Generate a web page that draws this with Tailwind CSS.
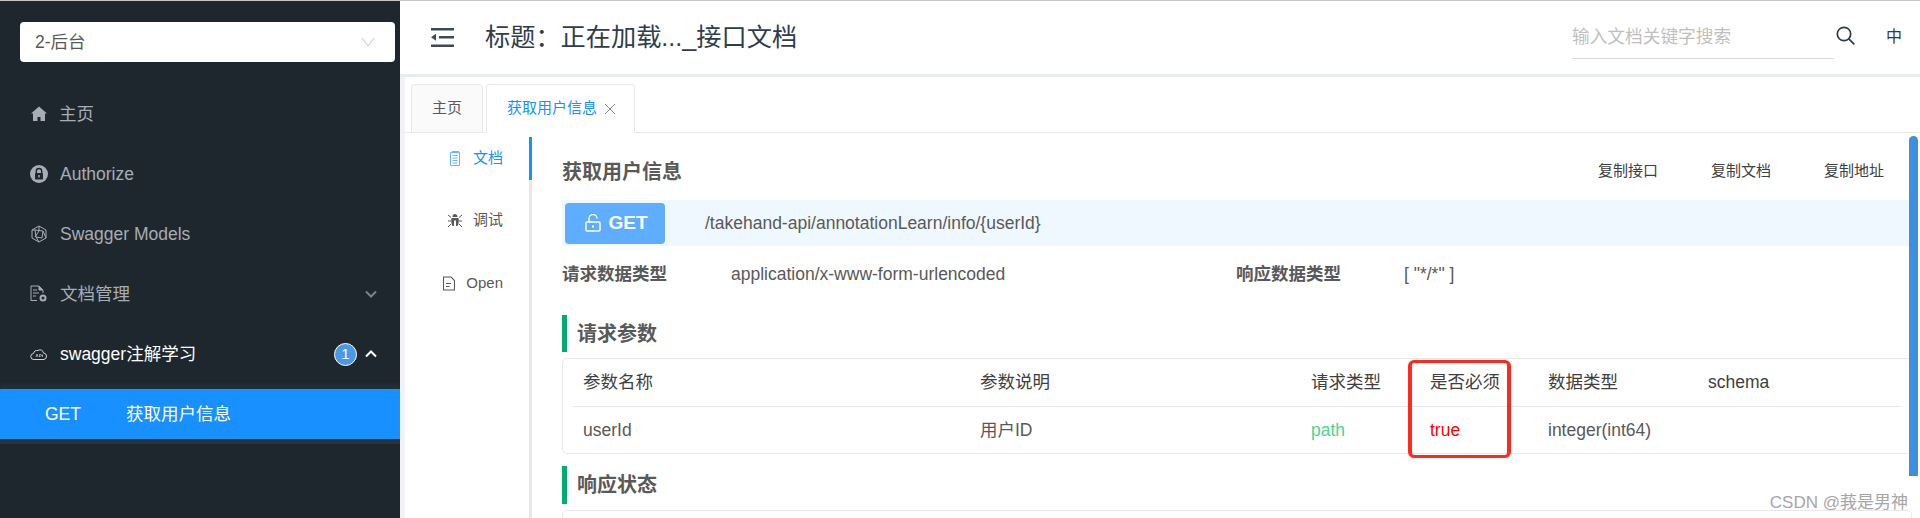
<!DOCTYPE html>
<html lang="zh">
<head>
<meta charset="utf-8">
<title>接口文档</title>
<script src="https://cdn.jsdelivr.net/npm/@tailwindcss/browser@4"></script>
</head>
<body class="m-0 bg-white font-['Liberation_Sans','Noto_Sans_CJK_SC',sans-serif]">
<div class="relative h-[518px] w-[1920px] overflow-hidden border-t border-[#c4c4c4] flex">
  <!-- Sidebar -->
  <aside class="w-[400px] shrink-0 bg-[#1f272e] flex flex-col">
    <div class="mt-[21px] ml-[20px] h-[40px] w-[375px] rounded-[4px] bg-white flex items-center justify-between pl-[15px] pr-[20px] text-[17.5px] text-[#595959]">
      <span>2-后台</span>
      <svg class="w-[14px] h-[10px]" viewBox="0 0 14 10" fill="none" stroke="#bfbfbf" stroke-width="1"><path d="M1 1l6 8 6-8"/></svg>
    </div>
    <nav class="mt-[22px] text-[17.5px] text-[#a6adb4]">
      <div class="h-[60px] flex items-center pl-[30px]">
        <svg class="w-[18px] h-[18px] mr-[11px]" viewBox="0 0 18 18" fill="#a6adb4"><path d="M9 1.500L1 8.500h2V16h4.500v-4h3v4H15V8.500h2z"/></svg>
        <span>主页</span>
      </div>
      <div class="h-[60px] flex items-center pl-[30px]">
        <svg class="w-[18px] h-[18px] mr-[12px]" viewBox="0 0 18 18"><circle cx="9" cy="9" r="9" fill="#a6adb4"/><path d="M6.300 8V6.200a2.700 2.700 0 015.400 0V8" fill="none" stroke="#1f272e" stroke-width="1.400"/><rect x="5" y="8" width="8" height="6.500" rx=".8" fill="#1f272e"/><rect x="8.300" y="10" width="1.400" height="2.500" fill="#a6adb4"/></svg>
        <span>Authorize</span>
      </div>
      <div class="h-[60px] flex items-center pl-[30px]">
        <svg class="w-[18px] h-[18px] mr-[12px]" viewBox="0 0 18 18" fill="none" stroke="#a6adb4" stroke-width="1"><path d="M9 1l7 4v8l-7 4-7-4V5z"/><path d="M5 5l8 1-1 7-6-1zM9 1v5l-4 6M13 6l3 7M2 5l3 0M6 12l3 5"/></svg>
        <span>Swagger Models</span>
      </div>
      <div class="h-[60px] flex items-center pl-[30px] pr-[23px]">
        <svg class="w-[18px] h-[18px] mr-[12px]" viewBox="0 0 18 18" fill="none" stroke="#a6adb4" stroke-width="1"><path d="M7 15.500H1V1h8l4 4v3"/><path d="M9 1v4h4" fill="#a6adb4"/><path d="M3 5h4M3 8h6M3 11h3"/><circle cx="13" cy="13" r="2.500" stroke-width="2"/></svg>
        <span>文档管理</span>
        <svg class="ml-auto w-[12px] h-[8px]" viewBox="0 0 12 8" fill="none" stroke="#7b8288" stroke-width="2"><path d="M1 1.500l5 5 5-5"/></svg>
      </div>
      <div class="h-[60px] flex items-center pl-[30px] pr-[23px] text-white">
        <svg class="w-[18px] h-[12px] mr-[12px]" viewBox="0 0 18 12" fill="none" stroke="#cfd3d6" stroke-width="1"><path d="M4 11.500a3 3 0 01-.5-6A4 4 0 018 2.500 3.500 3.500 0 0113.500 5a3.300 3.300 0 01.5 6.500z"/><path d="M6 9l1-3 1 3M9.500 9V6.500h1.200a.8.8 0 010 1.600H9.500M12.500 6.500V9" stroke-width=".7"/></svg>
        <span>swagger注解学习</span>
        <span class="ml-auto flex items-center justify-center w-[23px] h-[23px] rounded-full bg-[#4a98e8] border border-white text-[15px] mr-[8px]">1</span>
        <svg class="w-[12px] h-[8px]" viewBox="0 0 12 8" fill="none" stroke="#ffffff" stroke-width="2"><path d="M1 6.500l5-5 5 5"/></svg>
      </div>
      <div class="mt-[5px] h-[50px] bg-[#1890ff] flex items-center text-white shadow-[0_-4px_4px_rgba(60,75,85,0.25)]">
        <span class="w-[126px] pl-[45px]">GET</span>
        <span>获取用户信息</span>
      </div>
      <div class="h-[5px] bg-[#28343a]"></div>
    </nav>
  </aside>

  <!-- Main -->
  <main class="flex-1 min-w-0 flex flex-col">
    <header class="h-[73px] shrink-0 flex items-center bg-white">
      <svg class="ml-[31px] w-[23px] h-[19px]" viewBox="0 0 23 19" fill="#3d4a57"><rect x="0" y="0" width="23" height="2.500"/><rect x="8" y="8" width="15" height="2.500"/><rect x="0" y="16.500" width="23" height="2.500"/><path d="M0 9.200l5-3.500v7z"/></svg>
      <h1 class="ml-[31px] text-[25.2px] font-normal text-[#303d4a]">标题：正在加载..._接口文档</h1>
      <div class="ml-auto w-[262px] h-[38px] mt-[5px] border-b border-[#d9d9d9] text-[17.7px] text-[#bfbfbf] flex items-start leading-[32px]">输入文档关键字搜索</div>
      <svg class="ml-[2px] mb-[4px] w-[19px] h-[19px]" viewBox="0 0 19 19" fill="none" stroke="#2f3b47" stroke-width="1.700"><circle cx="8" cy="8" r="6.700"/><path d="M12.800 12.800l5.500 5.500"/></svg>
      <span class="ml-[31px] mr-[18px] mb-[2px] text-[16px] text-[#2f3b47]">中</span>
    </header>
    <div class="h-[3px] shrink-0 bg-[#e8ebef]"></div>
    <div class="flex-1 flex min-h-0">
      <div class="w-[5px] shrink-0 bg-[#f0f2f5]"></div>
      <div class="flex-1 min-w-0 relative">
        <!-- Tabs -->
        <div class="h-[56px] pt-[7px] pl-[6px] border-b border-[#e8e8e8] flex items-start gap-[3px] mr-[1px]">
          <div class="w-[72px] h-[49px] flex items-center justify-center bg-[#fafafa] border border-[#e8e8e8] rounded-t-[4px] text-[15px] text-[#595959]">主页</div>
          <div class="w-[149px] h-[49px] flex items-center pl-[20px] bg-white border border-[#e8e8e8] border-b-white rounded-t-[4px] text-[15px] text-[#1890ff]">
            <span>获取用户信息</span>
            <svg class="ml-[7px] w-[12px] h-[12px]" viewBox="0 0 12 12" fill="none" stroke="#8c8c8c" stroke-width="1"><path d="M1 1l10 10M11 1L1 11"/></svg>
          </div>
        </div>
        <div class="flex h-[391px]">
          <!-- Vertical tabs -->
          <div class="w-[127px] shrink-0 border-r-[3px] border-[#e8e8e8] relative mt-[4px] text-[15px] text-[#595959]">
            <div class="absolute right-[-3px] top-0 w-[3px] h-[43px] bg-[#1890ff]"></div>
            <div class="h-[43px] flex items-center justify-end pr-[26px] text-[#1890ff] gap-[12px]">
              <svg class="w-[12px] h-[15px]" viewBox="0 0 12 15" fill="none" stroke="#69b4ff" stroke-width="1"><path d="M1.500 1.500h9v13h-9zM3 .5h7M3.500 4.500h5M3.500 7h5M3.500 9.500h5M3.500 12h5"/></svg>
              <span>文档</span>
            </div>
            <div class="h-[63px] mt-[3px] pt-[12px] flex items-center justify-end pr-[26px] gap-[11px]">
              <svg class="w-[14px] h-[15px]" viewBox="0 0 14 14" fill="#595959"><path d="M4.500 3a2.500 2.500 0 015 0v.5h-5zM3.500 4.500h7c.5 2 .5 6-1 8H8V7H6v5.500H4.500c-1.500-2-1.500-6-1-8z"/><path d="M0 1.500l3 2.500M14 1.500l-3 2.500M0 7.500h3M14 7.500h-3M0 13.500l3-3M14 13.500l-3-3" stroke="#595959" stroke-width="1"/></svg>
              <span>调试</span>
            </div>
            <div class="h-[63px] flex items-center justify-end pr-[26px] gap-[11px] pt-[12px]">
              <svg class="w-[12px] h-[15px]" viewBox="0 0 12 14" fill="none" stroke="#595959" stroke-width="1.100"><path d="M.5.5h7.500l3.500 3.500v9.500H.5zM3 7h5M3 10h3.500"/></svg>
              <span>Open</span>
            </div>
          </div>
          <!-- Content -->
          <div class="flex-1 min-w-0 pl-[30px] text-[17.5px] text-[#595959]">
            <div class="h-[67px] mr-[10px] flex items-center justify-between pr-[26px]">
              <h2 class="text-[20px] font-bold text-[#595959] mt-[10px]">获取用户信息</h2>
              <div class="flex gap-[53px] mt-[10px] text-[15px] text-[#404040]">
                <span>复制接口</span><span>复制文档</span><span>复制地址</span>
              </div>
            </div>
            <div class="h-[46px] mr-[10px] bg-[#eff7ff] flex items-center pl-[3px]">
              <div class="w-[100px] h-[41px] rounded-[4px] bg-[#5fadff] text-white flex items-center justify-center gap-[7px] font-bold text-[19px] pl-[3px]">
                <svg class="w-[16px] h-[18px]" viewBox="0 0 16 18" fill="none" stroke="#ffffff" stroke-width="1.400"><path d="M4 8V4.500a4 4 0 018 0"/><rect x="1" y="8" width="14" height="9" rx="1"/><path d="M8 11.500v2" stroke-width="2"/></svg>
                <span>GET</span>
              </div>
              <span class="ml-[40px]">/takehand-api/annotationLearn/info/{userId}</span>
            </div>
            <div class="h-[56px] flex items-center">
              <span class="font-bold w-[169px]">请求数据类型</span>
              <span class="w-[505px]">application/x-www-form-urlencoded</span>
              <span class="font-bold w-[168px]">响应数据类型</span>
              <span>[ "*/*" ]</span>
            </div>
            <div class="mt-[13px] h-[37px] border-l-[5px] border-[#00ab6b] pl-[10px] flex items-center text-[20px] font-bold">请求参数</div>
            <div class="mt-[6px] mr-[8px] h-[96px] border border-[#e8e8e8] rounded-[5px] px-[10px]">
              <div class="h-[48px] grid grid-cols-[397px_331px_119px_118px_160px_1fr] items-center border-b border-[#e8e8e8] pl-[10px] text-[#404040]">
                <span>参数名称</span><span>参数说明</span><span>请求类型</span><span>是否必须</span><span>数据类型</span><span>schema</span>
              </div>
              <div class="h-[46px] grid grid-cols-[397px_331px_119px_118px_160px_1fr] items-center pl-[10px]">
                <span>userId</span><span>用户ID</span><span class="text-[#4fd28f]">path</span><span class="text-[#ff0000]">true</span><span>integer(int64)</span><span></span>
              </div>
            </div>
            <div class="mt-[12px] h-[38px] border-l-[5px] border-[#00ab6b] pl-[10px] flex items-center text-[20px] font-bold">响应状态</div>
            <div class="mt-[6px] mr-[8px] h-[40px] border border-[#e8e8e8] rounded-[5px]"></div>
          </div>
        </div>
        <!-- Scrollbar -->
        <div class="absolute right-[2px] top-[59px] w-[9px] h-[340px] rounded-t-[5px] bg-[#3f8fe0]"></div>
      </div>
    </div>
  </main>

  <!-- Annotation and watermark -->
  <div class="absolute left-[1408px] top-[359px] w-[103px] h-[98px] border-y-[3px] border-x-[4px] border-[#ff2a1c] rounded-[6px]"></div>
  <div class="absolute right-[12px] top-[489px] text-[17px] text-[#a6a6a6]">CSDN @莪是男神</div>
</div>
</body>
</html>
